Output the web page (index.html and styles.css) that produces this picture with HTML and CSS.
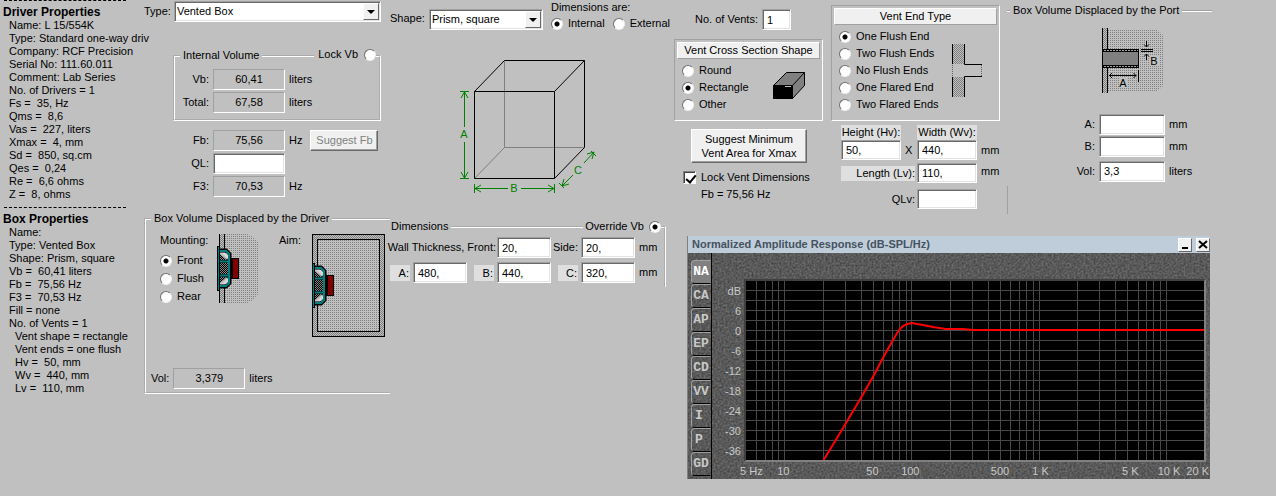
FILE: index.html
```html
<!DOCTYPE html>
<html lang="en">
<head>
<meta charset="utf-8">
<title>Box Design</title>
<link rel="stylesheet" href="styles.css">
</head>
<body>
<svg class="defs" aria-hidden="true">
  <defs>
    <pattern id="dots" width="2" height="2" patternUnits="userSpaceOnUse"><rect width="1" height="1" fill="#808080"/></pattern>
    <pattern id="checker" width="2" height="2" patternUnits="userSpaceOnUse"><path d="M0 0h1v1h-1zM1 1h1v1h-1z" fill="#808080"/></pattern>
    <pattern id="dark-checker" width="2" height="2" patternUnits="userSpaceOnUse"><rect width="2" height="2" fill="#808080"/><path d="M0 0h1v1h-1zM1 1h1v1h-1z" fill="#000"/></pattern>
    <symbol id="speaker" viewBox="0 0 24 46" overflow="visible">
      <path d="M2 3H10L14 7V38L10 42H2z" fill="#c0c0c0"/>
      <path d="M2 4.500H9L12.500 8V37L9 40.500H2M2 15.500H12M2 29.500H12" fill="none" stroke="#000" stroke-width="4"/>
      <path d="M3 8L10 14H3zM3 37L10 31H3z" fill="url(#dark-checker)"/>
      <path d="M5 7H9L11 9V13zM5 38H9L11 36V32z" fill="#d8d8d8"/>
      <rect x="3" y="17" width="8" height="11" fill="url(#dark-checker)"/>
      <path d="M2 5H9L12 8V37L9 40H2M2 15.500H12M2 29.500H12" fill="none" stroke="#008080" stroke-width="2"/>
      <rect x="0" y="0" width="3" height="45" fill="#000"/>
      <rect x="1" y="1" width="1" height="43" fill="#008080"/>
      <rect x="14" y="12" width="8" height="21" fill="#000"/>
      <rect x="16" y="13" width="5" height="19" fill="#800000"/>
    </symbol>
  </defs>
</svg>

<aside class="sidebar">
  <section class="props">
    <h2>Driver Properties</h2>
    <ul>
      <li>Name: L 15/554K</li>
      <li>Type: Standard one-way driv</li>
      <li>Company: RCF Precision</li>
      <li>Serial No: 111.60.011</li>
      <li>Comment: Lab Series</li>
      <li>No. of Drivers = 1</li>
      <li>Fs =  35, Hz</li>
      <li>Qms =  8,6</li>
      <li>Vas =  227, liters</li>
      <li>Xmax =  4, mm</li>
      <li>Sd =  850, sq.cm</li>
      <li>Qes =  0,24</li>
      <li>Re =  6,6 ohms</li>
      <li>Z =  8, ohms</li>
    </ul>
  </section>
  <section class="props">
    <h2>Box Properties</h2>
    <ul>
      <li>Name:</li>
      <li>Type: Vented Box</li>
      <li>Shape: Prism, square</li>
      <li>Vb =  60,41 liters</li>
      <li>Fb =  75,56 Hz</li>
      <li>F3 =  70,53 Hz</li>
      <li>Fill = none</li>
      <li>No. of Vents = 1</li>
      <li class="sub">Vent shape = rectangle</li>
      <li class="sub">Vent ends = one flush</li>
      <li class="sub">Hv =  50, mm</li>
      <li class="sub">Wv =  440, mm</li>
      <li class="sub">Lv =  110, mm</li>
    </ul>
  </section>
</aside>

<main class="workspace">
  <div class="box-col">
    <div class="type-row">
      <label for="type">Type:</label>
      <span class="combo"><select id="type"><option>Vented Box</option></select><i class="drop"></i></span>
    </div>
    <fieldset class="volume">
      <legend>Internal Volume</legend>
      <label class="corner lock">Lock Vb <input type="radio" name="lock"></label>
      <div class="field"><label for="vb">Vb:</label><output id="vb">60,41</output><span>liters</span></div>
      <div class="field"><label for="total">Total:</label><output id="total">67,58</output><span>liters</span></div>
    </fieldset>
    <div class="tuning">
      <div class="field"><label for="fb">Fb:</label><output id="fb">75,56</output><span>Hz</span><button type="button" class="btn suggest-fb" disabled>Suggest Fb</button></div>
      <div class="field"><label for="ql">QL:</label><input type="text" id="ql"></div>
      <div class="field"><label for="f3">F3:</label><output id="f3">70,53</output><span>Hz</span></div>
    </div>
    <fieldset class="driver">
      <legend>Box Volume Displaced by the Driver</legend>
      <div class="driver-body">
        <div class="mounting">
          <span>Mounting:</span>
          <label><input type="radio" name="mount" checked>Front</label>
          <label><input type="radio" name="mount">Flush</label>
          <label><input type="radio" name="mount">Rear</label>
        </div>
        <svg class="mount-art" width="43" height="69" viewBox="0 0 43 69" aria-hidden="true">
          <path d="M7 0H30L36 3L41 8V60L36 66L30 69H7z" fill="url(#dots)"/>
          <rect x="2" width="6" height="69" fill="#c0c0c0"/>
          <rect x="2" width="6" height="69" fill="url(#checker)"/>
          <path d="M2.500 0V69M7.500 0V69" stroke="#000"/>
          <use href="#speaker" x="0" y="12" width="24" height="46"/>
        </svg>
        <span class="aim">Aim:</span>
        <svg width="73" height="103" viewBox="0 0 73 103" aria-hidden="true">
          <rect x=".5" y=".5" width="72" height="102" fill="url(#checker)" stroke="#000"/>
          <rect x="5.500" y="5.500" width="62" height="92" fill="#c0c0c0"/>
          <rect x="5.500" y="5.500" width="62" height="92" fill="url(#dots)" stroke="#000"/>
          <use href="#speaker" x="0" y="29" width="24" height="46"/>
        </svg>
      </div>
      <div class="field vol"><label for="dvol">Vol:</label><output id="dvol">3,379</output><span>liters</span></div>
    </fieldset>
  </div>

  <div class="shape-col">
    <div class="shape-row">
      <label for="shape">Shape:</label>
      <span class="combo"><select id="shape"><option>Prism, square</option></select><i class="drop"></i></span>
      <div class="dims-are">
        <span>Dimensions are:</span>
        <div class="dims-opts">
          <label><input type="radio" name="dims" checked>Internal</label>
          <label><input type="radio" name="dims">External</label>
        </div>
      </div>
    </div>
    <svg class="cube" width="145" height="145" viewBox="0 0 145 145" aria-hidden="true">
      <path d="M44.500 5.500V92.500H124.500M44.500 92.500L14.500 123.500" fill="none" stroke="#808080"/>
      <path d="M14.500 36.500H94.500V123.500H14.500zM14.500 36.500L44.500 5.500H124.500V92.500L94.500 123.500M94.500 36.500L124.500 5.500" fill="none" stroke="#000"/>
      <g fill="none" stroke="#008000">
        <path d="M0 36.500H9M0 123.500H9M4.500 37V72M4.500 87V123M1 43L4.500 37L8 43M1 117L4.500 123L8 117"/>
        <path d="M14.500 129V138M94.500 129V138M15 133.500H48M61 133.500H94M21 130L15 133.500L21 137M88 130L94 133.500L88 137"/>
        <path d="M124 108L134 97M113 120L102 131M127 99L134 97L132 104M104 124L102 131L109 129M131 96L136 101M99 128L104 133"/>
      </g>
      <g class="cube-text" text-anchor="middle">
        <text x="4" y="83">A</text><text x="54" y="137">B</text><text x="118" y="119">C</text>
      </g>
    </svg>
    <fieldset class="dimensions">
      <legend>Dimensions</legend>
      <label class="corner override">Override Vb <input type="radio" name="override" checked></label>
      <div class="dim-row">
        <div class="pair wall"><label for="front">Wall Thickness, Front:</label><input type="text" id="front" value="20,"></div>
        <div class="pair"><label for="side">Side:</label><input type="text" id="side" value="20,"></div>
        <span>mm</span>
      </div>
      <div class="dim-row">
        <div class="pair"><label class="tint" for="da">A:</label><input type="text" id="da" value="480,"></div>
        <div class="pair"><label class="tint" for="db">B:</label><input type="text" id="db" value="440,"></div>
        <div class="pair"><label class="tint" for="dc">C:</label><input type="text" id="dc" value="320,"></div>
        <span>mm</span>
      </div>
    </fieldset>
  </div>

  <div class="right-col">
    <div class="vents">
      <div class="section-col">
        <div class="vent-count"><label for="nv">No. of Vents:</label><input type="text" id="nv" value="1"></div>
        <div class="panel">
          <h3>Vent Cross Section Shape</h3>
          <div class="panel-body">
            <div class="radios">
              <label><input type="radio" name="cross">Round</label>
              <label><input type="radio" name="cross" checked>Rectangle</label>
              <label><input type="radio" name="cross">Other</label>
            </div>
            <svg class="duct" width="33" height="28" viewBox="0 0 33 28" aria-hidden="true">
              <path d="M.5 13.500L13.500 .5H31.500V13.500L19.500 26.500H.5z" fill="#808080" stroke="#000"/>
              <path d="M.5 13.500H19.500V26.500H.5z" fill="#000" stroke="#000"/>
              <path d="M19.500 13.500L31.500 .5" stroke="#000"/>
              <path d="M12 14.500H18" stroke="#c0c0c0"/>
            </svg>
          </div>
        </div>
        <button type="button" class="btn suggest-min">Suggest Minimum<br>Vent Area for Xmax</button>
        <label class="lock-dims"><input type="checkbox" checked>Lock Vent Dimensions</label>
        <span class="fb-note">Fb = 75,56 Hz</span>
      </div>

      <div class="end-col">
        <div class="panel">
          <h3>Vent End Type</h3>
          <div class="panel-body">
            <div class="radios">
              <label><input type="radio" name="end" checked>One Flush End</label>
              <label><input type="radio" name="end">Two Flush Ends</label>
              <label><input type="radio" name="end">No Flush Ends</label>
              <label><input type="radio" name="end">One Flared End</label>
              <label><input type="radio" name="end">Two Flared Ends</label>
            </div>
            <svg class="end-art" width="31" height="54" viewBox="0 0 31 54" aria-hidden="true">
              <rect width="12" height="20" fill="url(#checker)"/><rect y="33" width="12" height="20" fill="url(#checker)"/>
              <path d="M.5 0V20M12.500 0V20.500H30M12.500 53V32.500H30M.5 33V53" fill="none" stroke="#000"/>
              <path d="M.5 21V33M29.500 21V32" stroke="#606060" stroke-dasharray="1 1"/>
            </svg>
          </div>
        </div>
        <div class="vent-size">
          <label class="tint" for="hv">Height (Hv):</label><i></i><label class="tint" for="wv">Width (Wv):</label><i></i>
          <input type="text" id="hv" value="50,"><span class="times">X</span><input type="text" id="wv" value="440,"><span>mm</span>
          <label class="tint wide" for="lv">Length (Lv):</label><input type="text" id="lv" value="110,"><span>mm</span>
          <label class="wide last" for="qlv">QLv:</label><input class="last" type="text" id="qlv">
        </div>
      </div>

      <div class="port">
        <h3 class="rule-title">Box Volume Displaced by the Port</h3>
        <svg class="port-art" width="61" height="65" viewBox="0 0 61 65" aria-hidden="true">
          <path d="M6 1H54L61 7V58L54 64H6z" fill="url(#dots)"/>
          <rect width="6" height="65" fill="#c0c0c0"/>
          <rect width="6" height="65" fill="url(#checker)"/>
          <path d="M.5 0V65M5.500 0V65" stroke="#000"/>
          <rect x="0" y="21" width="37" height="19" fill="#000"/>
          <rect x="1" y="24" width="35" height="13" fill="#808080"/>
          <path d="M2 22.500H36M2 38.500H36" stroke="#a0a0a0" stroke-dasharray="2 1"/>
          <g fill="none" stroke="#000">
            <path d="M7 47.500H34M10 45L7.500 47.500L10 50M31.500 45L34 47.500L31.500 50M36.500 42V54"/>
            <path d="M39 21.500H51M39 23.500H51M44.500 13V19M42 16.500L44.500 19L47 16.500M44.500 32V26M42 28.500L44.500 26L47 28.500"/>
          </g>
          <path d="M17 50H26V60H17zM48 28H57V38H48z" fill="#c0c0c0"/>
          <text x="21" y="59" text-anchor="middle">A</text><text x="52" y="37" text-anchor="middle">B</text>
        </svg>
        <div class="port-fields">
          <div class="field"><label for="pa">A:</label><input type="text" id="pa"><span>mm</span></div>
          <div class="field"><label for="pb">B:</label><input type="text" id="pb"><span>mm</span></div>
          <div class="field pvol"><label for="pv">Vol:</label><input type="text" id="pv" value="3,3"><span>liters</span></div>
        </div>
      </div>
    </div>

    <section class="window">
      <header class="titlebar">
        <h2>Normalized Amplitude Response (dB-SPL/Hz)</h2>
        <button type="button" aria-label="Minimize"><svg width="10" height="10" viewBox="0 0 10 10"><path d="M2 8H8" stroke="#000" stroke-width="2"/></svg></button>
        <button type="button" aria-label="Close"><svg width="10" height="10" viewBox="0 0 10 10"><path d="M1 1L9 8M9 1L1 8" stroke="#000" stroke-width="2"/></svg></button>
      </header>
      <div class="window-body">
        <svg class="texture" aria-hidden="true">
          <filter id="stone" x="0" y="0" width="100%" height="100%" color-interpolation-filters="sRGB">
            <feTurbulence type="fractalNoise" baseFrequency=".5" numOctaves="2" seed="4"/>
            <feColorMatrix values=".3 0 0 0 .2  .3 0 0 0 .2  .3 0 0 0 .2  0 0 0 0 1"/>
          </filter>
          <rect width="100%" height="100%" filter="url(#stone)"/>
        </svg>
        <nav class="tabs">
          <button type="button" class="active">NA</button>
          <button type="button">CA</button>
          <button type="button">AP</button>
          <button type="button">EP</button>
          <button type="button">CD</button>
          <button type="button">VV</button>
          <button type="button">I</button>
          <button type="button">P</button>
          <button type="button">GD</button>
        </nav>
        <div class="chart">
          <ol class="y-axis"><li>dB</li><li>6</li><li>0</li><li>-6</li><li>-12</li><li>-18</li><li>-24</li><li>-30</li><li>-36</li></ol>
          <svg class="plot" viewBox="0 0 458 179" preserveAspectRatio="none" role="img" aria-label="Amplitude response">
            <path fill="none" stroke="#484848" d="M10.500 0v179M19.500 0v179M26.500 0v179M32.500 0v179M38.500 0v179M77.500 0v179M99.500 0v179M115.500 0v179M127.500 0v179M137.500 0v179M146.500 0v179M153.500 0v179M160.500 0v179M165.500 0v179M204.500 0v179M226.500 0v179M242.500 0v179M254.500 0v179M264.500 0v179M273.500 0v179M280.500 0v179M287.500 0v179M293.500 0v179M331.500 0v179M353.500 0v179M369.500 0v179M381.500 0v179M392.500 0v179M400.500 0v179M407.500 0v179M414.500 0v179M420.500 0v179M0 9.500h458M0 19.500h458M0 29.500h458M0 39.500h458M0 49.500h458M0 59.500h458M0 69.500h458M0 79.500h458M0 89.500h458M0 99.500h458M0 109.500h458M0 119.500h458M0 129.500h458M0 139.500h458M0 149.500h458M0 159.500h458M0 169.500h458"/>
            <polyline fill="none" stroke="#f00" stroke-width="2" points="77,180 88,162 100,142 116,115 128,94 138,75 147,59 153,49 157,45 161,43 166,42 171,43 177,44 187,46 200,48 217,48 227,49 458,49"/>
          </svg>
          <svg class="x-axis" text-anchor="middle">
            <text x="1.6%" y="13">5 Hz</text><text x="8.5%" y="13">10</text><text x="27.8%" y="13">50</text><text x="36%" y="13">100</text><text x="55.4%" y="13">500</text><text x="64.2%" y="13">1 K</text><text x="83.6%" y="13">5 K</text><text x="92%" y="13">10 K</text><text x="98.2%" y="13">20 K</text>
          </svg>
        </div>
      </div>
    </section>
  </div>
</main>
</body>
</html>
```
FILE: styles.css
```css
* { box-sizing: border-box; }
body {
  margin: 0;
  display: flex;
  align-items: flex-start;
  min-height: 100vh;
  background: #c0c0c0;
  color: #000;
  font: 11px/13px "Liberation Sans", Arial, sans-serif;
}
h2, h3, ul, ol { margin: 0; padding: 0; font: inherit; list-style: none; }
svg { display: block; flex: none; }
.defs { position: absolute; width: 0; height: 0; }
label, span, legend, button, h3 { white-space: nowrap; }

/* controls */
input, select, button { font: inherit; color: inherit; margin: 0; border-radius: 0; }
input[type="text"], .combo {
  height: 21px;
  background: #fff;
  border: 1px solid;
  border-color: #a0a0a0 #fff #fff #a0a0a0;
  box-shadow: inset 1px 1px #696969, inset -1px -1px #e3e3e3;
}
input[type="text"] { flex: none; min-width: 0; padding: 0 4px; }
output {
  height: 21px;
  border: 1px solid;
  border-color: #a0a0a0 #fff #fff #a0a0a0;
  text-align: center;
  line-height: 18px;
}
.combo { position: relative; display: block; }
select { appearance: none; display: block; width: 100%; height: 19px; border: 0; background: transparent; padding: 0 20px 0 2px; }
.drop {
  position: absolute;
  top: 1px;
  right: 1px;
  width: 16px;
  height: 17px;
  background: #f0f0f0;
  border: 1px solid;
  border-color: #fff #696969 #696969 #fff;
  pointer-events: none;
}
.drop::after {
  content: "";
  position: absolute;
  left: 3px;
  top: 6px;
  border: 4px solid transparent;
  border-top-color: #000;
  border-bottom: 0;
}
input[type="radio"] {
  appearance: none;
  flex: none;
  width: 12px;
  height: 12px;
  border: 1px solid;
  border-color: #707070 #f0f0f0 #f0f0f0 #707070;
  border-radius: 50%;
  background: #fff;
}
input[type="radio"]:checked { background: radial-gradient(circle, #000 2px, #fff 3px); }
input[type="checkbox"] {
  appearance: none;
  position: relative;
  width: 13px;
  height: 13px;
  background: #fff;
  border: 1px solid;
  border-color: #808080 #fff #fff #808080;
  box-shadow: inset 1px 1px #404040;
}
input[type="checkbox"]:checked::after {
  content: "";
  position: absolute;
  left: 4px;
  top: 1px;
  width: 4px;
  height: 8px;
  border: solid #000;
  border-width: 0 2px 2px 0;
  transform: rotate(40deg);
}
.btn {
  background: #f0f0f0;
  border: 1px solid;
  border-color: #fff #696969 #696969 #fff;
  box-shadow: inset -1px -1px #a0a0a0;
  padding: 0;
}
.btn:disabled { color: #808080; }
fieldset { position: relative; margin: 0; min-width: 0; border: 2px groove #fff; }
legend { padding: 0 3px; }
.corner { position: absolute; display: flex; align-items: center; background: #c0c0c0; }
.tint { background: #dfdfdf; }
.field { display: flex; align-items: center; gap: 4px; height: 21px; }
.field > label { text-align: right; }

/* sidebar */
.sidebar { flex: none; width: 143px; }
.props { padding: 6px 0 5px 9px; position: relative; }
.props::before {
  content: "";
  position: absolute;
  top: 0;
  left: 4px;
  width: 122px;
  border-top: 1px dashed #000;
}
.props h2 { font-size: 12px; font-weight: bold; margin-left: -6px; }
.props li { white-space: pre; }
.props + .props { margin-top: 1px; }
.props .sub { padding-left: 6px; }

.workspace { flex: 1; min-width: 0; display: flex; align-items: flex-start; }

/* box type and driver */
.box-col { flex: none; width: 247px; padding: 1px 0 0 1px; }
.type-row { display: flex; align-items: center; gap: 3px; padding-right: 9px; }
.type-row .combo { flex: 1; }
.volume { margin: 27px 9px 0 29px; padding: 7px 0 6px; }
.volume legend { margin-left: 5px; }
.volume .corner { top: -14px; right: 3px; padding-left: 4px; gap: 6px; }
.volume .field + .field, .tuning .field + .field { margin-top: 2px; }
.volume .field > label { width: 34px; }
.tuning { margin-top: 9px; }
.tuning .field > label { width: 65px; }
.box-col output, .tuning input { width: 72px; }
.suggest-fb { width: 68px; height: 21px; margin-left: 4px; }
.driver { margin-top: 15px; padding: 9px 0 3px 5px; border-right: 0; }
.driver-body { display: flex; }
.mounting { display: flex; flex-direction: column; width: 66px; padding-left: 9px; gap: 5px; }
.mounting span { margin-bottom: 2px; }
.radios label, .mounting label, .dims-opts label { display: flex; align-items: center; gap: 5px; }
.aim { margin-left: 19px; width: 33px; }
.vol { margin-top: 31px; }

/* shape */
.shape-col { flex: none; width: 280px; padding-top: 9px; }
.shape-row { display: flex; align-items: flex-start; gap: 4px; height: 21px; }
.shape-row > label { padding-top: 3px; }
.shape-row .combo { width: 116px; }
.dims-are { margin: -8px 0 0 4px; }
.dims-opts { display: flex; gap: 8px; margin-top: 3px; }
.cube { margin: 25px 0 0 70px; }
.cube-text { fill: #008000; }
.dimensions { margin: 20px 4px 0 0; padding: 4px 0; border-left: 0; border-bottom: 0; }
.dimensions legend { padding-left: 1px; }
.dimensions .corner { top: -13px; right: 3px; gap: 5px; padding-left: 2px; }
.dim-row { display: flex; align-items: center; gap: 7px; }
.dim-row > span { margin-left: -3px; }
.dim-row + .dim-row { margin-top: 4px; }
.pair { display: flex; align-items: center; justify-content: flex-end; gap: 3px; width: 77px; }
.pair.wall { width: 161px; gap: 1px; }
.pair input { width: 54px; }
.pair .tint { width: 20px; line-height: 16px; text-align: right; padding-right: 1px; }

/* vents */
.right-col { flex: 1; min-width: 0; padding-left: 4px; }
.vents { display: flex; align-items: flex-start; min-height: 236px; }
.section-col { flex: none; width: 149px; padding-top: 9px; display: flex; flex-direction: column; align-items: flex-start; }
.vent-count { display: flex; align-items: center; gap: 4px; padding-left: 21px; margin-bottom: 9px; }
.vent-count input { width: 29px; }
.panel { width: 100%; border: 1px solid; border-color: #a0a0a0 #fff #fff #a0a0a0; padding: 2px; }
.panel h3 {
  background: #f0f0f0;
  border: 1px solid;
  border-color: #fff #a0a0a0 #a0a0a0 #fff;
  text-align: center;
  line-height: 15px;
}
.panel-body { display: flex; justify-content: space-between; padding: 3px 14px 5px 5px; }
.radios label { height: 17px; }
.section-col .panel { height: 82px; }
.duct { margin-top: 10px; }
.suggest-min { width: 116px; height: 34px; margin: 8px 0 0 17px; line-height: 14px; }
.lock-dims { display: flex; align-items: center; gap: 5px; margin: 8px 0 0 9px; }
.fb-note { margin: 4px 0 0 27px; }
.end-col { flex: none; width: 169px; margin-left: 8px; padding-top: 5px; }
.end-col .panel { height: 116px; }
.end-art { margin-top: 16px; }
.vent-size {
  display: grid;
  grid-template-columns: 60px 12px 60px auto;
  column-gap: 2px;
  align-items: center;
  margin: 4px 0 0 10px;
}
.vent-size .tint { text-align: center; line-height: 15px; }
.vent-size input { height: 20px; width: 100%; }
.vent-size span { padding-left: 2px; }
.vent-size .wide { grid-column: span 2; text-align: right; }
.vent-size #lv, .vent-size [for="lv"] { margin-top: 3px; }
.vent-size .last { margin-top: 6px; }
.port { flex: none; width: 205px; margin-left: 7px; padding-top: 4px; }
.rule-title { display: flex; align-items: center; gap: 3px; }
.rule-title::before, .rule-title::after { content: ""; width: 3px; border-top: 1px solid #a0a0a0; border-bottom: 1px solid #fff; }
.rule-title::after { flex: 1; }
.port-art { margin: 11px 0 0 95px; }
.port-fields { margin-top: 20px; }
.port .field { height: 22px; }
.port .field > label { width: 88px; }
.port .field input { width: 66px; }
.port .pvol { margin-top: 3px; }
.port::after { content: ""; display: block; height: 28px; margin-top: 4px; border-left: 1px solid #a0a0a0; }

/* response window */
.window { margin: 0 66px 17px 13px; border-left: 1px solid #808080; }
.titlebar { display: flex; align-items: center; height: 17px; padding-left: 4px; background: #bfcddb; gap: 4px; }
.titlebar h2 { flex: 1; font-weight: bold; color: #46525e; white-space: nowrap; }
.titlebar button {
  width: 14px;
  height: 14px;
  padding: 1px;
  background: #f0f0f0;
  border: 1px solid;
  border-color: #fff #696969 #696969 #fff;
}
.window-body { position: relative; display: flex; background: #565656; }
.texture { position: absolute; width: 100%; height: 100%; }
.tabs { position: relative; width: 24px; padding: 7px 0 3px 3px; border-right: 1px solid #000; }
.tabs button {
  display: block;
  width: 20px;
  height: 24px;
  padding: 0;
  background: transparent;
  color: #c8c8c8;
  border: 1px solid;
  border-color: #a0a0a0 transparent #000 #a0a0a0;
  border-radius: 4px 0 0 4px;
  font: bold 13px/20px "Liberation Mono", monospace;
}
.tabs button:nth-child(7), .tabs button:nth-child(8) { padding-right: 4px; }
.tabs .active { background: #808080; color: #fff; }
.chart {
  position: relative;
  flex: 1;
  min-width: 0;
  display: grid;
  grid-template-columns: 32px 1fr;
  padding: 26px 4px 0 0;
  color: #c8c8c8;
}
.y-axis { text-align: right; line-height: 20px; padding: 2px 3px 0 0; height: 183px; }
.plot {
  width: 100%;
  height: 183px;
  background: #000;
  border: 2px solid;
  border-color: #404040 #808080 #808080 #404040;
}
.x-axis { grid-column: 2; width: 100%; height: 17px; overflow: visible; fill: #c8c8c8; }
```
